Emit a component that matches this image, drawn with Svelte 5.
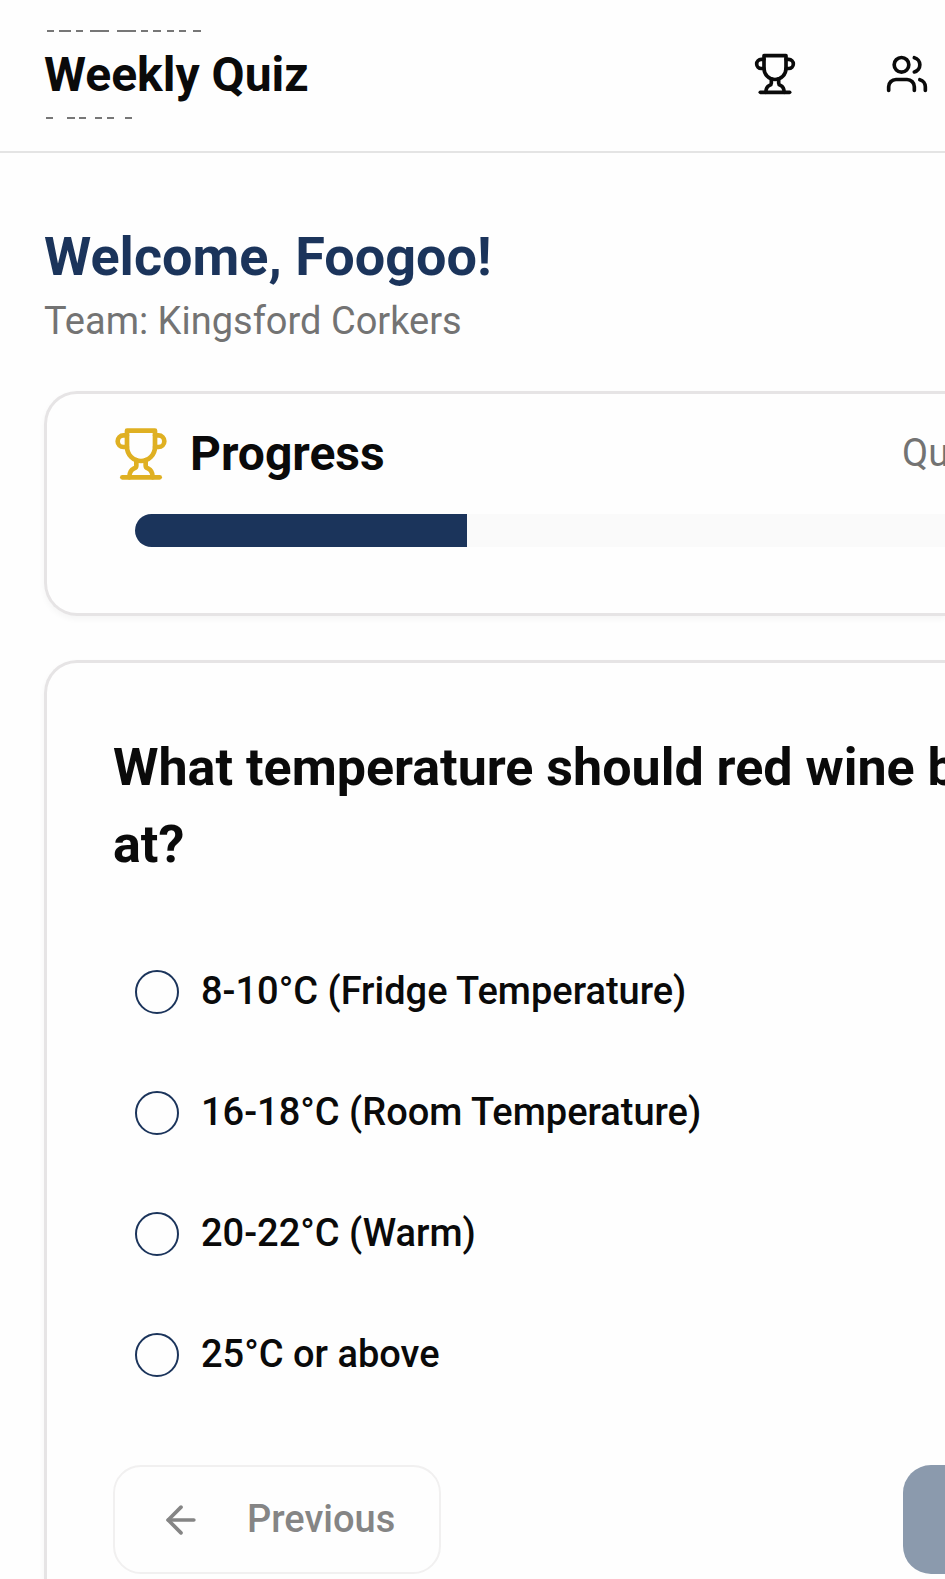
<script>
  const options = [
    '8-10°C (Fridge Temperature)',
    '16-18°C (Room Temperature)',
    '20-22°C (Warm)',
    '25°C or above'
  ];
  const progress = 41;
  let answer = $state('');
</script>

{#snippet trophy()}
  <svg class="icon" viewBox="0 0 24 24" aria-hidden="true">
    <path d="M6 9H4.5a2.5 2.5 0 0 1 0-5H6" />
    <path d="M18 9h1.5a2.5 2.5 0 0 0 0-5H18" />
    <path d="M4 22h16" />
    <path d="M10 14.66V17c0 .55-.47.98-.97 1.21C7.85 18.75 7 20.24 7 22" />
    <path d="M14 14.66V17c0 .55.47.98.97 1.21C16.15 18.75 17 20.24 17 22" />
    <path d="M18 2H6v7a6 6 0 0 0 12 0V2Z" />
  </svg>
{/snippet}

<div class="page">
  <header>
    <div class="brand">
      <svg class="dashes" width="160" height="2" viewBox="0 0 160 2" aria-hidden="true">
        <path d="M2 1h7M14 1h12M31 1h7M45 1h19M72 1h19M96 1h7M108 1h8M122 1h7M134 1h7M148 1h8" />
      </svg>
      <h1>Weekly Quiz</h1>
      <svg class="dashes" width="160" height="2" viewBox="0 0 160 2" aria-hidden="true">
        <path d="M1 1h7M22 1h8M34 1h7M50 1h7M62 1h7M80 1h7" />
      </svg>
    </div>
    <nav>
      <button type="button" aria-label="Leaderboard">{@render trophy()}</button>
      <button type="button" aria-label="Teams">
        <svg class="icon" viewBox="0 0 24 24" aria-hidden="true">
          <path d="M16 21v-2a4 4 0 0 0-4-4H6a4 4 0 0 0-4 4v2" />
          <circle cx="9" cy="7" r="4" />
          <path d="M22 21v-2a4 4 0 0 0-3-3.87" />
          <path d="M16 3.13a4 4 0 0 1 0 7.75" />
        </svg>
      </button>
    </nav>
  </header>

  <main>
    <h2 class="welcome">Welcome, Foogoo!</h2>
    <p class="team">Team: Kingsford Corkers</p>

    <section class="card progress-card">
      <div class="progress-head">
        {@render trophy()}
        <h3>Progress</h3>
        <span class="count">Question</span>
      </div>
      <div class="track" role="progressbar" aria-label="Progress" aria-valuenow={progress} aria-valuemin="0" aria-valuemax="100">
        <div class="fill" style="width: {progress}%"></div>
      </div>
    </section>

    <section class="card question-card">
      <h3 class="question" id="question">What temperature should red wine be<br />at?</h3>
      <div class="options" role="radiogroup" aria-labelledby="question">
        {#each options as option}
          <label>
            <input type="radio" name="answer" value={option} bind:group={answer} />
            <span>{option}</span>
          </label>
        {/each}
      </div>
      <div class="actions">
        <button type="button" class="previous" disabled>
          <svg class="icon" viewBox="0 0 24 24" aria-hidden="true">
            <path d="m12 19-7-7 7-7" />
            <path d="M19 12H5" />
          </svg>
          <span>Previous</span>
        </button>
        <button type="button" class="next" aria-label="Next" disabled></button>
      </div>
    </section>
  </main>
</div>

<style>
  :global(body) {
    margin: 0;
    background: #fefefe;
  }
  .page {
    box-sizing: border-box;
    display: flex;
    flex-direction: column;
    min-height: 100vh;
    overflow: hidden;
    font-family: Roboto, 'Liberation Sans', sans-serif;
    font-size: 38px;
    line-height: 42px;
    color: #0a0a0a;
  }
  h1, h2, h3, p {
    margin: 0;
  }
  button {
    box-sizing: border-box;
    margin: 0;
    padding: 0;
    border: 0;
    background: none;
    color: inherit;
    font: inherit;
  }
  .icon {
    display: block;
    flex: none;
    width: 44px;
    height: 44px;
    fill: none;
    stroke: currentColor;
    stroke-width: 2;
    stroke-linecap: round;
    stroke-linejoin: round;
  }
  header {
    display: flex;
    justify-content: space-between;
    align-items: flex-start;
    padding: 30px 16px 32px 44px;
    border-bottom: 2px solid #e4e4e4;
  }
  .brand {
    display: flex;
    flex-direction: column;
  }
  .dashes {
    display: block;
    margin-left: 1px;
    stroke: #777777;
    stroke-width: 2;
  }
  h1 {
    padding: 9px 0 8px;
    font-size: 48px;
    line-height: 68px;
    font-weight: 700;
  }
  nav {
    display: flex;
    gap: 88px;
    padding-top: 22px;
  }
  main {
    flex: 1;
    display: flex;
    flex-direction: column;
    padding: 67px 0 0 44px;
  }
  .welcome {
    font-size: 54px;
    line-height: 74px;
    font-weight: 700;
    color: #1b345b;
  }
  .team {
    line-height: 54px;
    color: #737373;
  }
  .card {
    border: 3px solid #e6e4e5;
    border-right: 0;
    border-radius: 33px 0 0 33px;
    box-shadow: 0 3px 6px rgba(0, 0, 0, 0.04);
  }
  .progress-card {
    margin-top: 43px;
    padding: 32px 0 66px 66px;
  }
  .progress-head {
    display: flex;
    align-items: center;
    gap: 21px;
  }
  .progress-head .icon {
    width: 56px;
    height: 56px;
    color: #dfb022;
  }
  h3 {
    font-size: 48px;
    line-height: 56px;
    font-weight: 700;
  }
  .count {
    align-self: flex-start;
    flex: 0 0 43px;
    margin-left: auto;
    overflow: hidden;
    white-space: nowrap;
    line-height: 54px;
    color: #737373;
  }
  .track {
    margin: 32px 0 0 22px;
    height: 33px;
    border-radius: 17px 0 0 17px;
    background: #fafafa;
    overflow: hidden;
  }
  .fill {
    height: 100%;
    background: #1b345b;
  }
  .question-card {
    flex: 1;
    margin-top: 44px;
    padding: 66px 0 5px 66px;
    border-bottom: 0;
    border-radius: 33px 0 0 0;
  }
  .question {
    overflow: hidden;
    white-space: nowrap;
    font-size: 52px;
    line-height: 77px;
  }
  .options {
    display: flex;
    flex-direction: column;
    gap: 77px;
    padding: 87px 0 88px 22px;
  }
  label {
    display: flex;
    align-items: flex-start;
    gap: 22px;
    font-weight: 500;
  }
  input {
    appearance: none;
    box-sizing: border-box;
    flex: none;
    width: 44px;
    height: 44px;
    margin: 0;
    border: 2px solid #1b345b;
    border-radius: 50%;
  }
  input:checked {
    background: radial-gradient(#1b345b 40%, transparent 44%);
  }
  .actions {
    display: flex;
    justify-content: space-between;
  }
  .previous {
    display: flex;
    align-items: flex-start;
    gap: 44px;
    padding: 31px 44px 30px;
    border: 2px solid #f1f0f0;
    border-radius: 28px;
    font-weight: 500;
    color: #858585;
  }
  .next {
    width: 42px;
    border-radius: 28px 0 0 28px;
    background: #8b9aad;
  }
</style>
